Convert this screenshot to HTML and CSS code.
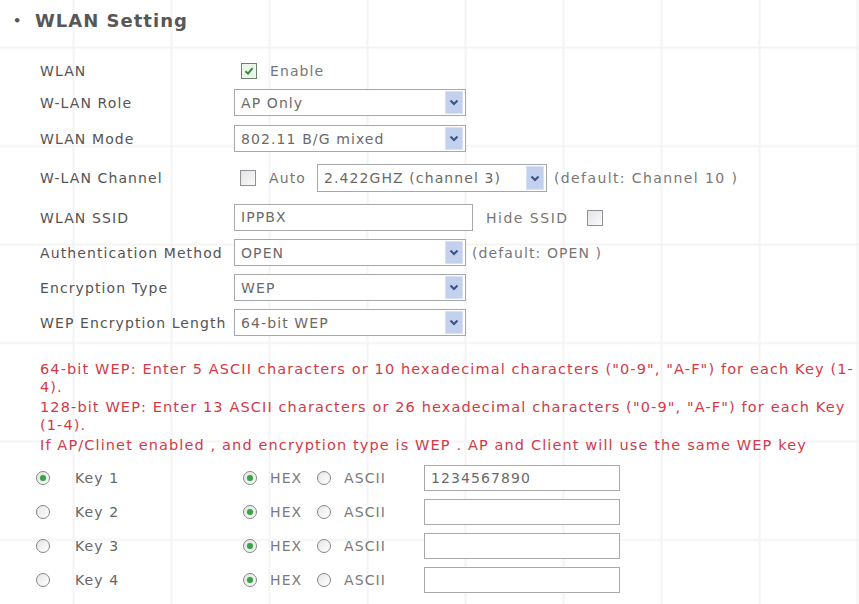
FILE: index.html
```html
<!DOCTYPE html>
<html>
  <head>
    <title>WLAN Setting</title>
    <link rel="stylesheet" href="styles.css">
  </head>
  <body>
    <h2 class="heading"><span class="dot">&bull;</span>WLAN Setting</h2>

    <div class="form">
      <div class="row row-short">
        <span class="label">WLAN</span>
        <span class="check on"><svg width="12" height="12" viewBox="0 0 12 12"><path d="M2.5 6.2 L5 8.6 L9.6 3.2" fill="none" stroke="#2f8f3a" stroke-width="2"/></svg></span>
        <span class="opt">Enable</span>
      </div>
      <div class="row">
        <span class="label">W-LAN Role</span>
        <div class="select"><span>AP Only</span><i class="arrow"><svg width="10" height="7" viewBox="0 0 10 7"><path d="M1.5 1.5 L5 5 L8.5 1.5" fill="none" stroke="#3b5384" stroke-width="2"/></svg></i></div>
      </div>
      <div class="row row-mode">
        <span class="label">WLAN Mode</span>
        <div class="select"><span>802.11 B/G mixed</span><i class="arrow"><svg width="10" height="7" viewBox="0 0 10 7"><path d="M1.5 1.5 L5 5 L8.5 1.5" fill="none" stroke="#3b5384" stroke-width="2"/></svg></i></div>
      </div>
      <div class="row row-channel">
        <span class="label">W-LAN Channel</span>
        <span class="check"></span>
        <span class="opt auto">Auto</span>
        <div class="select narrow"><span>2.422GHZ (channel 3)</span><i class="arrow"><svg width="10" height="7" viewBox="0 0 10 7"><path d="M1.5 1.5 L5 5 L8.5 1.5" fill="none" stroke="#3b5384" stroke-width="2"/></svg></i></div>
        <span class="hint">(default: Channel 10 )</span>
      </div>
      <div class="row row-ssid">
        <span class="label">WLAN SSID</span>
        <div class="input wide">IPPBX</div>
        <span class="opt hide">Hide SSID</span>
        <span class="check"></span>
      </div>
      <div class="row">
        <span class="label">Authentication Method</span>
        <div class="select"><span>OPEN</span><i class="arrow"><svg width="10" height="7" viewBox="0 0 10 7"><path d="M1.5 1.5 L5 5 L8.5 1.5" fill="none" stroke="#3b5384" stroke-width="2"/></svg></i></div>
        <span class="hint">(default: OPEN )</span>
      </div>
      <div class="row">
        <span class="label">Encryption Type</span>
        <div class="select"><span>WEP</span><i class="arrow"><svg width="10" height="7" viewBox="0 0 10 7"><path d="M1.5 1.5 L5 5 L8.5 1.5" fill="none" stroke="#3b5384" stroke-width="2"/></svg></i></div>
      </div>
      <div class="row">
        <span class="label">WEP Encryption Length</span>
        <div class="select"><span>64-bit WEP</span><i class="arrow"><svg width="10" height="7" viewBox="0 0 10 7"><path d="M1.5 1.5 L5 5 L8.5 1.5" fill="none" stroke="#3b5384" stroke-width="2"/></svg></i></div>
      </div>
    </div>

    <div class="note">
      <p>64-bit WEP: Enter 5 ASCII characters or 10 hexadecimal characters ("0-9", "A-F") for each Key (1-&#8203;4).</p>
      <p>128-bit WEP: Enter 13 ASCII characters or 26 hexadecimal characters ("0-9", "A-F") for each Key (1-&#8203;4).</p>
      <p>If AP/Clinet enabled , and encryption type is WEP . AP and Client will use the same WEP key</p>
    </div>

    <div class="keys">
      <div class="key-row">
        <span class="key"><span class="radio on"></span>Key 1</span>
        <span class="fmt hex"><span class="radio on"></span>HEX</span>
        <span class="fmt ascii"><span class="radio"></span>ASCII</span>
        <div class="input key-input">1234567890</div>
      </div>
      <div class="key-row">
        <span class="key"><span class="radio"></span>Key 2</span>
        <span class="fmt hex"><span class="radio on"></span>HEX</span>
        <span class="fmt ascii"><span class="radio"></span>ASCII</span>
        <div class="input key-input"></div>
      </div>
      <div class="key-row">
        <span class="key"><span class="radio"></span>Key 3</span>
        <span class="fmt hex"><span class="radio on"></span>HEX</span>
        <span class="fmt ascii"><span class="radio"></span>ASCII</span>
        <div class="input key-input"></div>
      </div>
      <div class="key-row">
        <span class="key"><span class="radio"></span>Key 4</span>
        <span class="fmt hex"><span class="radio on"></span>HEX</span>
        <span class="fmt ascii"><span class="radio"></span>ASCII</span>
        <div class="input key-input"></div>
      </div>
    </div>
  </body>
</html>
```

FILE: styles.css
```css
body {
  margin: 0;
  color: #545454;
  font-family: "DejaVu Sans", Verdana, sans-serif;
  font-size: 14px;
  letter-spacing: 1.1px;
  background-color: #fff;
  /* faint page grid */
  background-image:
    linear-gradient(to right, transparent 0, #f4f4f4 1px, #f4f4f4 2px, transparent 3px),
    linear-gradient(to bottom, transparent 0, #f4f4f4 1px, #f4f4f4 2px, transparent 3px);
  background-size: 98px 98.5px;
  background-position: 72px 46px;
}

.heading { margin: 0; height: 40px; padding-left: 13px; display: flex; align-items: center; font-size: 18px; font-weight: bold; color: #575757; letter-spacing: 1px; }
.heading .dot { width: 22px; font-size: 13px; }

.form { padding-top: 22px; display: flex; flex-direction: column; gap: 8px; }
.row { display: flex; align-items: center; height: 27px; }
.row-short { height: 18px; margin-bottom: 1px; }
.row-mode { margin-top: 1px; }
.row-channel { height: 28px; margin-top: 4px; }
.row-ssid { margin-top: 4px; }
.label { width: 194px; padding-left: 40px; flex-shrink: 0; }

.select {
  width: 232px;
  height: 27px;
  box-sizing: border-box;
  border: 1px solid #a4a8ad;
  background: #fff;
  display: flex;
  align-items: center;
  justify-content: space-between;
  padding: 1px 2px 1px 6px;
  color: #6a6a6a;
}
.select.narrow { width: 230px; height: 28px; }
.arrow { width: 18px; align-self: stretch; background: #c3d1ef; border: 1px solid #d7e0f4; box-sizing: border-box; display: flex; align-items: center; justify-content: center; }

.input {
  height: 27px;
  box-sizing: border-box;
  border: 1px solid #a9a9a9;
  background: #fff;
  padding-left: 6px;
  line-height: 25px;
  color: #6a6a6a;
}
.input.wide { width: 239px; }

.check { width: 16px; height: 16px; box-sizing: border-box; border: 1px solid #8d9094; background: linear-gradient(135deg, #e4e4e4, #fafafa); display: inline-flex; align-items: center; justify-content: center; }
.check.on { border-color: #6f7f72; background: #eaf6ea; margin-left: 7px; }

.opt { color: #777; margin-left: 13px; }
.auto { margin-left: 13px; margin-right: 11px; }
.row-channel .check { margin-left: 6px; }
.hide { margin-left: 13px; margin-right: 18px; letter-spacing: 1.5px; }
.hint { color: #777; margin-left: 6px; }
.row-channel .hint { margin-left: 7px; letter-spacing: 1.4px; }

.note {
  margin-top: 24px;
  padding-left: 40px;
  color: #d23a48;
  font-size: 14.5px;
  letter-spacing: 1.12px;
  line-height: 18px;
}
.note p { margin: 0 0 2px; }

.keys { margin-top: 11px; display: flex; flex-direction: column; gap: 8px; }
.key-row { display: flex; align-items: center; height: 26px; padding-left: 36px; color: #666; }
.key { width: 207px; display: flex; align-items: center; }
.key .radio { margin-right: 25px; }
.fmt { display: flex; align-items: center; color: #7a7a7a; }
.hex { width: 74px; }
.ascii { width: 107px; }
.key-input { width: 196px; height: 26px; }

.radio { width: 14px; height: 14px; box-sizing: border-box; border: 1.5px solid #858585; border-radius: 50%; background: linear-gradient(135deg, #e6e6e6, #fff); margin-right: 13px; display: inline-flex; align-items: center; justify-content: center; }
.radio.on::after { content: ""; width: 6px; height: 6px; border-radius: 50%; background: #3aa24a; box-shadow: 0 0 2px #9fdba6; }
```
